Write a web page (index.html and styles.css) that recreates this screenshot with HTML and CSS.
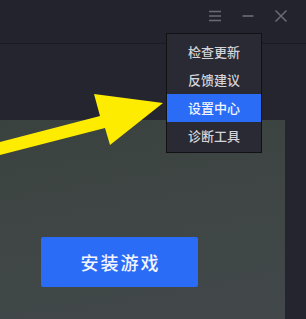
FILE: index.html
```html
<!DOCTYPE html>
<html lang="zh-CN">
<head>
<meta charset="utf-8">
<link rel="stylesheet" href="styles.css">
</head>
<body>
<div class="app">
  <header class="titlebar">
    <div class="controls">
      <svg class="icon" width="14" height="14" viewBox="0 0 14 14"><path d="M1 2.5H13M1 7H13M1 11.5H13" stroke="#6b6b78" stroke-width="1.6"/></svg>
      <svg class="icon" width="14" height="14" viewBox="0 0 14 14"><path d="M1.5 7H12.5" stroke="#6b6b78" stroke-width="1.6"/></svg>
      <svg class="icon" width="14" height="14" viewBox="0 0 14 14"><path d="M1.5 1.5L12.5 12.5M12.5 1.5L1.5 12.5" stroke="#6b6b78" stroke-width="1.5"/></svg>
    </div>
  </header>
  <main class="body">
    <section class="panel">
      <button class="install">安装游戏</button>
    </section>
  </main>
  <ul class="menu">
    <li class="item">检查更新</li>
    <li class="item">反馈建议</li>
    <li class="item active">设置中心</li>
    <li class="item">诊断工具</li>
  </ul>
  <svg class="arrow" width="170" height="170" viewBox="0 0 170 170">
    <polygon points="0,142 100,116 94,94 163,103 110,145 105,128 0,155" fill="#fdec00"/>
  </svg>
</div>
</body>
</html>
```
FILE: styles.css
```css
* { box-sizing: border-box; }
html, body { margin: 0; padding: 0; }
body {
  width: 306px;
  height: 319px;
  overflow: hidden;
  background: #252530;
  font-family: "Noto Sans CJK SC", "Noto Sans", sans-serif;
}
.app {
  position: relative;
  width: 306px;
  height: 319px;
  display: flex;
  flex-direction: column;
}
.titlebar {
  height: 44px;
  background: #23232d;
  border-bottom: 1px solid #1b1b23;
  display: flex;
  justify-content: flex-end;
  padding: 9px 18px 0 0;
}
.controls {
  display: flex;
  gap: 19px;
  height: 14px;
}
.icon { display: block; }
.body {
  flex: 1;
  display: flex;
  flex-direction: column;
  padding-top: 76px;
}
.panel {
  flex: 1;
  width: 285px;
  background: linear-gradient(170deg, #3a423f 0%, #3f4645 50%, #42484a 100%);
  padding: 117px 0 0 41px;
}
.install {
  width: 157px;
  height: 50px;
  border: none;
  border-radius: 2px;
  background: #2b6cf6;
  color: #f2f5ff;
  font-family: "Noto Sans CJK SC", sans-serif;
  font-size: 18px;
  font-weight: 500;
  letter-spacing: 2px;
  padding: 0 0 0 2px;
}
.menu {
  position: absolute;
  left: 166px;
  top: 33px;
  width: 96px;
  height: 120px;
  margin: 0;
  padding: 4px 0;
  list-style: none;
  background: #2a2a35;
  border: 1px solid #111116;
}
.item {
  height: 28px;
  line-height: 28px;
  text-align: center;
  font-size: 13px;
  font-weight: 500;
  color: #d4d4d8;
}
.item.active {
  background: #2b6cf6;
  color: #f2f5ff;
}
.arrow {
  position: absolute;
  left: 0;
  top: 0;
}
```
